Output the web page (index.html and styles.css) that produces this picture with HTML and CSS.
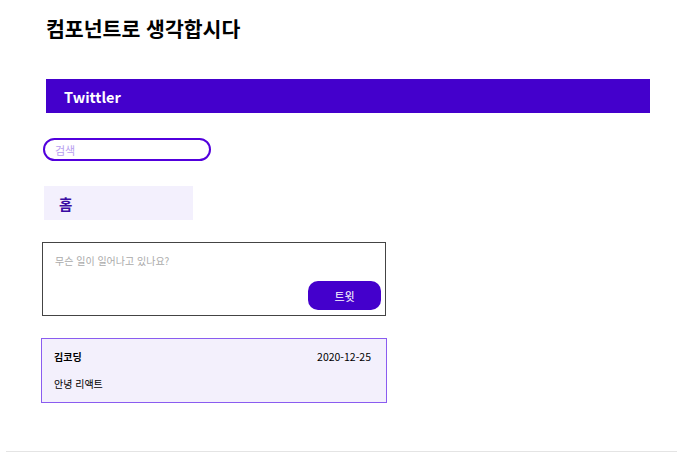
FILE: index.html
```html
<!DOCTYPE html>
<html lang="ko">
<head>
<meta charset="utf-8">
<link rel="stylesheet" href="styles.css">
</head>
<body>
<div class="page">
  <h1 class="title">컴포넌트로 생각합시다</h1>
  <header class="topbar"><span class="brand">Twittler</span></header>
  <div class="search"><input class="search-input" type="text" placeholder="검색"></div>
  <nav class="menu"><div class="menu-item">홈</div></nav>
  <div class="compose">
    <div class="compose-placeholder">무슨 일이 일어나고 있나요?</div>
    <div class="compose-actions"><button class="tweet-btn">트윗</button></div>
  </div>
  <div class="tweet">
    <div class="tweet-head"><span class="tweet-user">김코딩</span><span class="tweet-date">2020-12-25</span></div>
    <div class="tweet-body">안녕 리액트</div>
  </div>
</div>
<div class="footer-line"></div>
</body>
</html>
```
FILE: styles.css
```css
* { box-sizing: border-box; }
html, body { margin: 0; padding: 0; background: #fff; }
body {
  font-family: "Noto Sans CJK KR", "Noto Sans", sans-serif;
  color: #000;
}
.page {
  padding: 14px 0 0 46px;
  height: 451px;
}
.title {
  margin: 0;
  font-size: 20.5px;
  font-weight: 700;
  line-height: 28px;
  height: 65px;
}
.topbar {
  width: 604px;
  height: 34px;
  background: #4400cc;
  display: flex;
  align-items: center;
  padding-left: 18px;
}
.brand {
  color: #fff;
  font-weight: 700;
  font-size: 14.5px;
}
.search {
  margin: 25px 0 0 -3px;
  height: 23px;
  display: flex;
}
.search-input {
  width: 168px;
  height: 23px;
  border: 2px solid #5200dd;
  border-radius: 12px;
  padding: 0 0 0 10px;
  font-family: inherit;
  font-size: 11px;
  outline: none;
}
.search-input::placeholder { color: #b79ef0; }
.menu {
  margin: 25px 0 0 -2px;
}
.menu-item {
  width: 149px;
  height: 34px;
  background: #f3f0fd;
  color: #3a0ca3;
  font-weight: 700;
  font-size: 14.5px;
  display: flex;
  align-items: center;
  padding-left: 15px;
}
.compose {
  margin: 22px 0 0 -4px;
  width: 344px;
  height: 74px;
  border: 1px solid #444;
  padding: 10px 4px 5px 12px;
  display: flex;
  flex-direction: column;
  justify-content: space-between;
}
.compose-placeholder {
  color: #aaa;
  font-size: 10px;
  line-height: 16px;
}
.compose-actions {
  display: flex;
  justify-content: flex-end;
}
.tweet-btn {
  width: 73px;
  height: 29px;
  border: none;
  border-radius: 10px;
  background: #4400cc;
  color: #fff;
  font-family: inherit;
  font-size: 11px;
}
.tweet {
  margin: 22px 0 0 -5px;
  width: 346px;
  height: 65px;
  border: 1px solid #8a5cf0;
  background: #f3f0fc;
  padding: 10px 15px 0 12px;
}
.tweet-head {
  display: flex;
  justify-content: space-between;
  font-size: 10px;
  line-height: 16px;
}
.tweet-user { font-weight: 700; }
.tweet-date { font-size: 10.5px; }
.tweet-body {
  margin-top: 11px;
  font-size: 10px;
  line-height: 16px;
}
.footer-line {
  margin-left: 6px;
  height: 1px;
  background: #e4e4e4;
}
```
